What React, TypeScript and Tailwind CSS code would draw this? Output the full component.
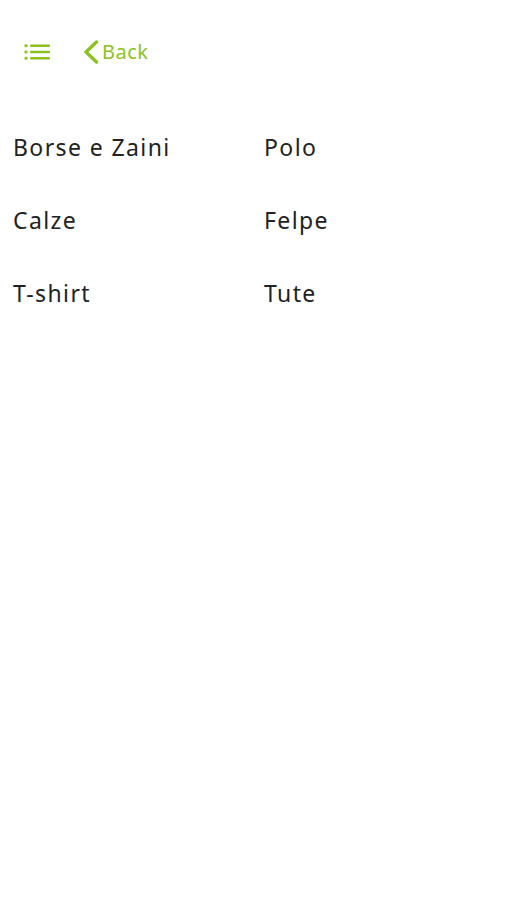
import React from "react";

const items = ["Borse e Zaini", "Polo", "Calze", "Felpe", "T-shirt", "Tute"];

export default function App() {
  return (
    <div className="min-h-[900px] bg-white" style={{ fontFamily: '"Noto Sans", "Open Sans", sans-serif' }}>
      <div className="flex items-center h-[104px] px-[24px]">
        <svg width="26" height="16" viewBox="0 0 26 16" className="shrink-0">
          <g fill="#8cc220">
            <rect x="0.5" y="0.3" width="3" height="3" rx="1" />
            <rect x="0.5" y="6.5" width="3" height="3" rx="1" />
            <rect x="0.5" y="12.7" width="3" height="3" rx="1" />
            <rect x="6" y="0.5" width="20" height="2.6" rx="1" />
            <rect x="6" y="6.7" width="20" height="2.6" rx="1" />
            <rect x="6" y="12.9" width="20" height="2.6" rx="1" />
          </g>
        </svg>
        <div className="flex items-center ml-[33px] text-[#8cc220]">
          <svg width="16" height="24" viewBox="0 0 16 24" className="shrink-0">
            <path d="M13.5 2 L3 12 L13.5 22" fill="none" stroke="#8cc220" strokeWidth="3.4" strokeLinecap="round" strokeLinejoin="round" />
          </svg>
          <span className="ml-[3px] text-[20px] leading-none tracking-[0.5px]">Back</span>
        </div>
      </div>
      <div className="grid grid-cols-[251px_1fr] px-[13px] pt-[29px] gap-y-[44px]">
        {items.map((t) => (
          <div key={t} className="text-[23px] leading-[29px] tracking-[1.4px] text-[#222222]">
            {t}
          </div>
        ))}
      </div>
    </div>
  );
}
